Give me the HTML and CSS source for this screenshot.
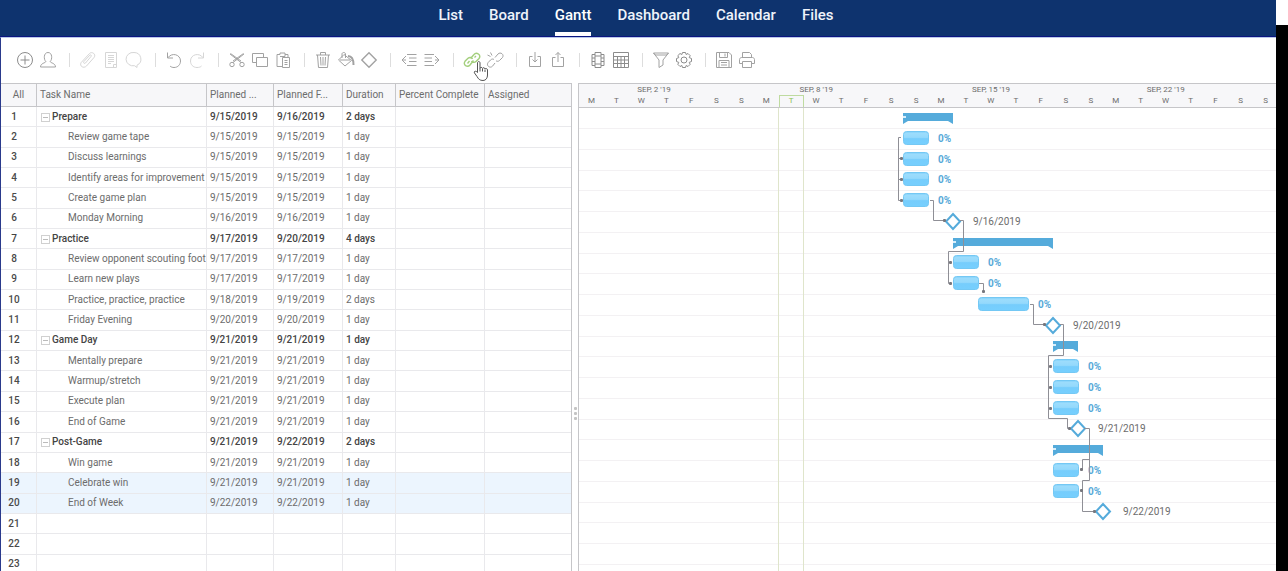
FILE: index.html
```html
<!DOCTYPE html>
<html lang="en">
<head>
  <meta charset="UTF-8" />
  <meta name="viewport" content="width=device-width, initial-scale=1.0" />
  <title>Gantt</title>
  <link rel="stylesheet" href="styles.css">
</head>
<body>
  <div class="app">
    <nav class="top-nav">
      <a href="#list">List</a>
      <a href="#board">Board</a>
      <a href="#gantt" class="active">Gantt</a>
      <a href="#dashboard">Dashboard</a>
      <a href="#calendar">Calendar</a>
      <a href="#files">Files</a>
    </nav>

    <main class="workspace">
      <div class="toolbar">
        <button class="dark" aria-label="Add task"><svg viewBox="0 0 18 18"><circle cx="9" cy="9" r="7.5"/><path d="M9 4.5v9M4.5 9h9"/></svg></button>
        <button aria-label="Assign"><svg viewBox="0 0 18 18"><path d="M6.8 10.5C4.6 8.500 4.500 1.500 9 1.500s4.400 7 2.200 9c0 1.500 5.300 1.500 5.300 5.500h-15c0-4 5.300-4 5.300-5.500z"/></svg></button>
        <span class="sep"></span>
        <button class="dim" aria-label="Attach"><svg viewBox="0 0 18 18"><path d="M12 5.500l-5.500 6.500c-1 1-2.500 0-1.700-1.300M2.200 11.500L10.500 2.500c2.500-2.500 7 .8 4.500 4L7.500 15c-3 3-7.500 0-5.300-3.500zM4.800 10.700l6-6.500c1-.8 2.200.3 1.200 1.300"/></svg></button>
        <button class="dim" aria-label="Notes"><svg viewBox="0 0 18 18"><path d="M3.500 1.500h11v15h-11zM6 4.500h6M6 6.500h6M6 8.500h6M6 10.500h6M6 12.500h3M11.500 16.500v-3h3"/></svg></button>
        <button class="dim" aria-label="Comments"><svg viewBox="0 0 18 18"><path d="M9 1.500a7 6.700 0 0 1 3 12.700V16.500l-2.500-1.800A7 6.700 0 1 1 9 1.500z"/></svg></button>
        <span class="sep"></span>
        <button aria-label="Undo"><svg viewBox="0 0 18 18"><path d="M2.500 1.500v5.500h5.500M2.800 6.800C7 1 15.500 3.500 15.500 10c0 3.500-2.500 6.500-6.500 6.500-1.500 0-3-.5-4-1.500"/></svg></button>
        <button class="dim" aria-label="Redo"><svg viewBox="0 0 18 18"><path d="M15.500 1.500v5.500H10M15.200 6.800C11 1 2.500 3.500 2.500 10c0 3.500 2.500 6.500 6.500 6.500 2 0 3.500-.5 4.500-1.500"/></svg></button>
        <span class="sep"></span>
        <button aria-label="Cut"><svg viewBox="0 0 18 18"><path d="M2 3l11 8.500M2.500 2.500L13 10M16 3L5 11.500M15.500 2.500L5 10"/><circle cx="4" cy="13.500" r="2.200"/><circle cx="14" cy="13.500" r="2.200"/></svg></button>
        <button aria-label="Copy"><svg viewBox="0 0 18 18"><path d="M5 11.500H1.500v-9h11V6M5.500 6.500h11v9h-11z"/></svg></button>
        <button aria-label="Paste"><svg viewBox="0 0 18 18"><path d="M8 15.500H3v-12h3V2h5v1.500h3V6M6 5.500h5v-2M8.500 6.500h7v10h-7zM10.500 9.500h3M10.500 11.500h3M10.500 13.500h3"/></svg></button>
        <span class="sep"></span>
        <button aria-label="Delete"><svg viewBox="0 0 18 18"><path d="M2 4h14M6.500 4V1.500h5V4M3.500 4l1 12.500h9l1-12.500M6.500 6l.5 8.500M9 6v8.500M11.500 6l-.5 8.500"/></svg></button>
        <button aria-label="Fill colour"><svg viewBox="0 0 18 18"><path d="M7 3.500l7.500 6-6.500 5.500-6.500-6zM5 7V3c0-2 3.500-2 3.500 0v4M3 9h10"/><path d="M11 5c4 0 5.500 3 5.500 9" class="thick"/></svg></button>
        <button aria-label="Milestone"><svg viewBox="0 0 18 18"><path d="M9 1.800L16.200 9 9 16.200 1.800 9z" class="medium"/></svg></button>
        <span class="sep"></span>
        <button aria-label="Outdent"><svg viewBox="0 0 18 18"><path d="M7 3.500h9.500M9 7h7.500M9 10.500h7.500M7 14.500h9.500M6 5L2 9l4 4M2 9h4"/></svg></button>
        <button aria-label="Indent"><svg viewBox="0 0 18 18"><path d="M1.500 3.500H11M1.500 7H9M1.500 10.500H9M1.500 14.500H11M12 5l4 4-4 4M16 9h-4"/></svg></button>
        <span class="sep"></span>
        <button class="link" aria-label="Link tasks"><svg viewBox="0 0 18 18"><path class="medium" d="M7.500 7.500l3.500-4c2.500-3 7.500.5 5 4l-3 3c-1.500 1.500-4 1-4.500-.5M10.500 9.500L7 14c-2.500 3-7.500 0-5-3.700l3-3c1.500-1.300 4-1 4.500.7M11.500 6.500l1.500-1.500M4.500 12.500L6.500 10"/></svg>
          <svg class="cursor" viewBox="0 0 16 22"><path d="M4.500 12V3c0-2 2.500-2 2.500 0v5.500c0-1.500 2.300-1.500 2.500 0 .3-1.200 2.300-1 2.500.5.500-1 2.500-.5 2.500 1v5c0 3-1.500 5.500-4.500 5.500-3.500 0-4.500-1.500-6-4L1.500 13c-1-2 1.500-2.500 3-.5zM7 8.500v3M9.500 9v2.500M12 9.500v2.500"/></svg>
        </button>
        <button aria-label="Unlink tasks"><svg viewBox="0 0 18 18"><path d="M9 6.500l3-3.500c2.500-2.500 6.500.5 4.500 3.500l-3 3c-1 1-2.500 1-3.500.3M8 8.500c-1-.8-2.500-.5-3.500.5L2 11.700c-2 3 2 6 4.500 3.500L9 12M1.500 4l3 1.500M4.500 1.500L6 4.500"/></svg></button>
        <span class="sep"></span>
        <button aria-label="Import"><svg viewBox="0 0 18 18"><path d="M6.500 5.500h-3v10h11v-10h-3M9 1v9.500M6.500 8.500L9 11l2.500-2.500"/></svg></button>
        <button aria-label="Export"><svg viewBox="0 0 18 18"><path d="M6.500 6.500h-3v9h11v-9h-3M9 11V1.500M6.500 4L9 1.500 11.500 4"/></svg></button>
        <span class="sep"></span>
        <button class="dark" aria-label="Columns"><svg viewBox="0 0 18 18"><path d="M6 1.500h6v15H6zM6 3.500H3v11h3M12 3.500h3v11h-3M3 7h3M3 10.500h3M12 7h3M12 10.500h3M6 5h6M6 13h6"/></svg></button>
        <button class="dark" aria-label="Table view"><svg viewBox="0 0 18 18"><path d="M1.500 1.500h15v15h-15zM1.500 5.500h15M1.500 9h15M1.500 12.500h15M5.500 5.500v11M9 5.500v11M12.500 5.500v11"/></svg></button>
        <span class="sep"></span>
        <button aria-label="Filter"><svg viewBox="0 0 18 18"><path d="M1.500 2h15L11 9v5l-4 2.500V9zM1.500 2l2 2h11l2-2"/></svg></button>
        <button class="dark" aria-label="Settings"><svg viewBox="0 0 18 18"><path d="M7.500 1.500h3l.6 2 1.900-1 2.200 2.200-1 1.900 2.300.9v3l-2.300.9 1 1.900-2.200 2.200-1.900-1-.6 2h-3l-.6-2-1.900 1-2.200-2.200 1-1.900-2.300-.9v-3l2.300-.9-1-1.900L5 2.500l1.900 1z"/><circle cx="9" cy="9" r="3"/></svg></button>
        <span class="sep"></span>
        <button aria-label="Save"><svg viewBox="0 0 18 18"><path d="M1.500 1.500h12.500l2.500 2.500v12.500h-15zM4.500 1.500v5h8v-5M10 2.500v3M4 16.500V9.500h10v7M6 11.500h6M6 14h6"/></svg></button>
        <button aria-label="Print"><svg viewBox="0 0 18 18"><path d="M4.500 6.500v-5h7l2 2v3M4.500 12.500h-3v-4c0-1 1-2 2-2h11c1 0 2 1 2 2v4h-3M4.500 10.500h9v6h-9z"/></svg></button>
      </div>

      <div class="panes">
        <section class="grid-pane">
          <table class="task-table">
            <colgroup>
              <col class="col-num"><col class="col-name"><col class="col-start"><col class="col-finish"><col class="col-duration"><col class="col-percent"><col>
            </colgroup>
            <thead>
              <tr>
                <th>All</th>
                <th>Task Name</th>
                <th>Planned ...</th>
                <th>Planned F...</th>
                <th>Duration</th>
                <th>Percent Complete</th>
                <th>Assigned</th>
              </tr>
            </thead>
            <tbody id="taskRows"></tbody>
          </table>
        </section>

        <div class="splitter"><i></i><i></i><i></i></div>

        <section class="chart-pane">
          <div class="timeline">
            <div class="time-header">
              <div class="weeks"><span class="first">SEP, 2 '19</span><span>SEP, 8 '19</span><span>SEP, 15 '19</span><span>SEP, 22 '19</span></div>
              <div class="days" id="days"></div>
            </div>
            <svg id="chart" class="chart" width="699" height="463" viewBox="0 0 699 463">
              <defs>
                <linearGradient id="barFill" x1="0" y1="0" x2="0" y2="1">
                  <stop offset="0" stop-color="#7fd0fa"/>
                  <stop offset="0.15" stop-color="#9cdcfc"/>
                  <stop offset="0.45" stop-color="#94d9fc"/>
                  <stop offset="0.55" stop-color="#76cdfc"/>
                  <stop offset="1" stop-color="#76cffe"/>
                </linearGradient>
              </defs>
            </svg>
          </div>
        </section>
      </div>
    </main>
  </div>
  <aside class="edge"></aside>

  <script>
    // name, start, finish, duration, type, first day on the chart, number of days
    const tasks = [
      ['Prepare', '9/15/2019', '9/16/2019', '2 days', 'group', 13, 2],
      ['Review game tape', '9/15/2019', '9/15/2019', '1 day', 'task', 13, 1],
      ['Discuss learnings', '9/15/2019', '9/15/2019', '1 day', 'task', 13, 1],
      ['Identify areas for improvement', '9/15/2019', '9/15/2019', '1 day', 'task', 13, 1],
      ['Create game plan', '9/15/2019', '9/15/2019', '1 day', 'task', 13, 1],
      ['Monday Morning', '9/16/2019', '9/16/2019', '1 day', 'milestone', 15],
      ['Practice', '9/17/2019', '9/20/2019', '4 days', 'group', 15, 4],
      ['Review opponent scouting foot', '9/17/2019', '9/17/2019', '1 day', 'task', 15, 1],
      ['Learn new plays', '9/17/2019', '9/17/2019', '1 day', 'task', 15, 1],
      ['Practice, practice, practice', '9/18/2019', '9/19/2019', '2 days', 'task', 16, 2],
      ['Friday Evening', '9/20/2019', '9/20/2019', '1 day', 'milestone', 19],
      ['Game Day', '9/21/2019', '9/21/2019', '1 day', 'group', 19, 1],
      ['Mentally prepare', '9/21/2019', '9/21/2019', '1 day', 'task', 19, 1],
      ['Warmup/stretch', '9/21/2019', '9/21/2019', '1 day', 'task', 19, 1],
      ['Execute plan', '9/21/2019', '9/21/2019', '1 day', 'task', 19, 1],
      ['End of Game', '9/21/2019', '9/21/2019', '1 day', 'milestone', 20],
      ['Post-Game', '9/21/2019', '9/22/2019', '2 days', 'group', 19, 2],
      ['Win game', '9/21/2019', '9/21/2019', '1 day', 'task', 19, 1],
      ['Celebrate win', '9/21/2019', '9/21/2019', '1 day', 'task', 19, 1],
      ['End of Week', '9/22/2019', '9/22/2019', '1 day', 'milestone', 21]
    ];
    const selected = [19, 20];
    const totalRows = 23;
    const totalDays = 28;
    const today = 8;
    const chartWidth = 699;

    // Dependency lines
    const links = [
      'M322 29.5H319.5V92.5H323M319.5 50.5H323M319.5 71.5H323',
      'M351 92.5H354.5V112.5H367',
      'M381 112.5H384.5V143.5H369.5V175.5H372M369.5 154.5H372',
      'M400 175.5H404.5V184',
      'M451 196.5H454.5V216.5H466',
      'M481 216.5H484.5V247.5H469.5V310.5H488.5V320.5H491M469.5 258.5H472M469.5 279.5H472M469.5 300.5H472',
      'M505 320.5H510.5V372.5H503.5V403.5H516M510.5 351.5H503.5V361.5H501M503.5 382.5H501'
    ];
    const arrows = [[322, 50], [322, 71], [322, 92], [371, 154], [371, 175], [404, 183],
      [471, 258], [471, 279], [471, 300], [502, 361], [502, 382], [365, 112], [465, 216], [490, 320], [515, 403]];

    function renderTable() {
      let html = '';
      for (let i = 0; i < totalRows; i++) {
        const task = tasks[i] || ['', '', '', '', ''];
        const [name, start, finish, duration, type] = task;
        const toggle = type === 'group' ? `<button class="toggle" aria-label="Collapse ${name}"></button>` : '';
        const cls = [type === 'group' ? 'group' : '', selected.includes(i + 1) ? 'selected' : ''].join(' ').trim();
        html += `<tr class="${cls}"><td>${i + 1}</td><td>${toggle}${name}</td><td>${start}</td><td>${finish}</td><td>${duration}</td><td></td><td></td></tr>`;
      }
      document.getElementById('taskRows').innerHTML = html;
    }

    function renderDays() {
      const letters = 'MTWTFSSMTWTFSSMTWTFSSMTWTFSS';
      let html = '';
      for (let i = 0; i < totalDays; i++) {
        html += `<span class="${i === today ? 'today' : ''}">${letters[i]}</span>`;
      }
      document.getElementById('days').innerHTML = html;
    }

    function dayX(day) {
      return Math.floor(day * chartWidth / totalDays);
    }

    // 20 rows take 415px
    function rowY(row) {
      return Math.round(10 + row * 415 / 20);
    }

    function renderChart() {
      let svg = '';
      for (let i = 0; i < totalRows; i++) {
        svg += `<rect class="row-line" x="0" y="${rowY(i) + 10}" width="${chartWidth}" height="1"/>`;
      }
      svg += `<path class="today-line" d="M${dayX(today)}.5 0V463M${dayX(today + 1)}.5 0V463"/>`;

      tasks.forEach((task, i) => {
        const [name, start, finish, duration, type, day, days] = task;
        const x = dayX(day);
        const y = rowY(i);
        if (type === 'group') {
          const end = dayX(day + days);
          svg += `<path class="summary" d="M${x} ${y - 5}H${end}V${y + 6}L${end - 5} ${y + 3}H${x + 5}L${x} ${y + 6}z"/>`;
          svg += `<rect class="notch" x="${x}" y="${y - 2}" width="3" height="2"/>`;
        } else if (type === 'task') {
          const w = dayX(day + days) - x;
          svg += `<rect class="bar" x="${x}.5" y="${y - 8}.5" width="${w}" height="13" rx="3"/>`;
          svg += `<text class="percent" x="${x + w + 10}" y="${y + 3}">0%</text>`;
        } else {
          svg += `<path class="milestone" d="M${x} ${y - 8}l7 7.500-7 7.500-7-7.500z"/>`;
          svg += `<text class="date" x="${x + 20}" y="${y + 3}">${finish}</text>`;
        }
      });

      links.forEach(d => svg += `<path class="link-line" d="${d}"/>`);
      arrows.forEach(([x, y]) => svg += `<rect class="arrow" x="${x - 1}" y="${y - 1}" width="3" height="3" rx="1"/>`);
      document.getElementById('chart').innerHTML += svg;
    }

    renderTable();
    renderDays();
    renderChart();
  </script>
</body>
</html>
```
FILE: styles.css
```css
:root {
  --navy: #0e336e;
  --line: #e9e9ec;
  --border: #c6c6c9;
  --head-bg: #f7f7f9;
  --text: #6c6c6c;
  --blue: #55abdb;
}

* {
  box-sizing: border-box;
}

body {
  font-family: Roboto, sans-serif;
  font-size: 10px;
  color: var(--text);
  background: #fff;
  margin: 0;
  height: 100vh;
  display: flex;
  overflow: hidden;
}

.app {
  flex: 1;
  min-width: 0;
  display: flex;
  flex-direction: column;
}

.edge {
  width: 12px;
  background: #000;
  border-top: 25px solid #fff;
}

.top-nav {
  display: flex;
  flex: none;
  justify-content: center;
  gap: 26px;
  height: 37px;
  padding-right: 4px;
  background: var(--navy);
  border-bottom: 1px solid #0a1480;
}

.top-nav a {
  color: #eef3fb;
  font-size: 15px;
  font-weight: 500;
  line-height: 30px;
  padding-bottom: 2px;
  text-decoration: none;
  border-bottom: 4px solid transparent;
}

.top-nav a.active {
  color: #fff;
  border-bottom-color: #fff;
}

.workspace {
  flex: 1;
  min-height: 0;
  display: flex;
  flex-direction: column;
  border-left: 1px solid #2a3a8c;
  border-top: 1px solid #b9c9ea;
}

/* toolbar */
.toolbar {
  display: flex;
  flex: none;
  align-items: center;
  gap: 5px;
  height: 45px;
  padding: 0 15px 2px;
}

.toolbar button {
  position: relative;
  width: 18px;
  height: 18px;
  padding: 0;
  border: none;
  background: none;
  color: #a2a2a2;
  cursor: pointer;
}

.toolbar button.dim {
  color: #d6d6d6;
}

.toolbar button.dark {
  color: #8c8c8c;
}

.toolbar button.link {
  color: #a3cf7c;
}

.toolbar svg {
  display: block;
  width: 18px;
  height: 18px;
  fill: none;
  stroke: currentColor;
  stroke-width: 1;
}

.toolbar .thick {
  stroke-width: 2;
}

.toolbar .medium {
  stroke-width: 1.4;
}

.toolbar .cursor {
  position: absolute;
  left: 10px;
  top: 9px;
  z-index: 1;
  width: 16px;
  height: 22px;
  fill: #fff;
  stroke: #555;
}

.sep {
  width: 1px;
  height: 14px;
  margin: 0 4px 0 7px;
  background: #ddd;
}

/* task grid */
.panes {
  flex: 1;
  min-height: 0;
  display: flex;
}

.grid-pane {
  flex: 0 0 571px;
  overflow: hidden;
  border-top: 1px solid var(--border);
  border-right: 1px solid var(--border);
}

.task-table {
  width: 100%;
  height: 491px;
  table-layout: fixed;
  border-collapse: separate;
  border-spacing: 0;
}

.col-num { width: 36px; }
.col-name { width: 170px; }
.col-start { width: 67px; }
.col-finish { width: 69px; }
.col-duration { width: 53px; }
.col-percent { width: 89px; }

.task-table th,
.task-table td {
  padding: 0 0 0 3px;
  line-height: 16px;
  text-align: left;
  white-space: nowrap;
  overflow: hidden;
  border-right: 1px solid var(--line);
  border-bottom: 1px solid var(--line);
}

.task-table th {
  height: 23px;
  font-weight: 400;
  background: var(--head-bg);
  border-color: var(--border);
}

.task-table th:last-child,
.task-table td:last-child {
  border-right: none;
}

.task-table th:first-child,
.task-table td:first-child {
  padding: 0;
  text-align: center;
}

.task-table td:first-child {
  padding-right: 9px;
  font-weight: 500;
  color: #4a4a4a;
}

.task-table td:nth-child(2) {
  padding-left: 31px;
}

.task-table .group td {
  font-weight: 500;
  color: #444;
}

.task-table .group td:nth-child(2) {
  padding-left: 4px;
}

.task-table .selected td {
  background: #ecf5fe;
}

.toggle {
  width: 9px;
  height: 9px;
  margin: 0 2px 0 0;
  padding: 0;
  vertical-align: -1px;
  border: 1px solid #d0d0d0;
  background: linear-gradient(#bbb, #bbb) center / 5px 1px no-repeat #fff;
}

.splitter {
  flex: 0 0 6px;
  display: flex;
  flex-direction: column;
  align-items: center;
  justify-content: center;
  gap: 2px;
  padding-top: 172px;
}

.splitter i {
  width: 3px;
  height: 3px;
  border-radius: 1px;
  background: #c4c4c4;
}

/* chart */
.chart-pane {
  flex: 1;
  min-width: 0;
  overflow: hidden;
  border-top: 1px solid var(--border);
  border-left: 1px solid var(--border);
}

.timeline {
  width: 699px;
}

.time-header {
  height: 24px;
  font-size: 8px;
  text-align: center;
  background: var(--head-bg);
  border-bottom: 1px solid var(--border);
}

.weeks,
.days {
  display: grid;
  grid-template-columns: repeat(28, 1fr);
}

.weeks span {
  grid-column: span 7;
  line-height: 11px;
}

.weeks .first {
  grid-column: span 6;
}

.days span {
  height: 12px;
  line-height: 12px;
}

.days .today {
  color: #8cc152;
  line-height: 10px;
  border: 1px solid #bfdba0;
  border-bottom: none;
}

.chart {
  display: block;
}

.row-line {
  fill: #f3f1f3;
}

.today-line {
  fill: none;
  stroke: #dfe5cb;
}

.summary {
  fill: var(--blue);
}

.notch {
  fill: #d8effc;
}

.bar {
  fill: url(#barFill);
  stroke: #74c8f4;
}

.percent {
  font-weight: 700;
  fill: #58a9d8;
}

.date {
  fill: var(--text);
}

.milestone {
  fill: #fff;
  stroke: var(--blue);
  stroke-width: 2;
}

.link-line {
  fill: none;
  stroke: #8f8f96;
}

.arrow {
  fill: #77777e;
}
```
